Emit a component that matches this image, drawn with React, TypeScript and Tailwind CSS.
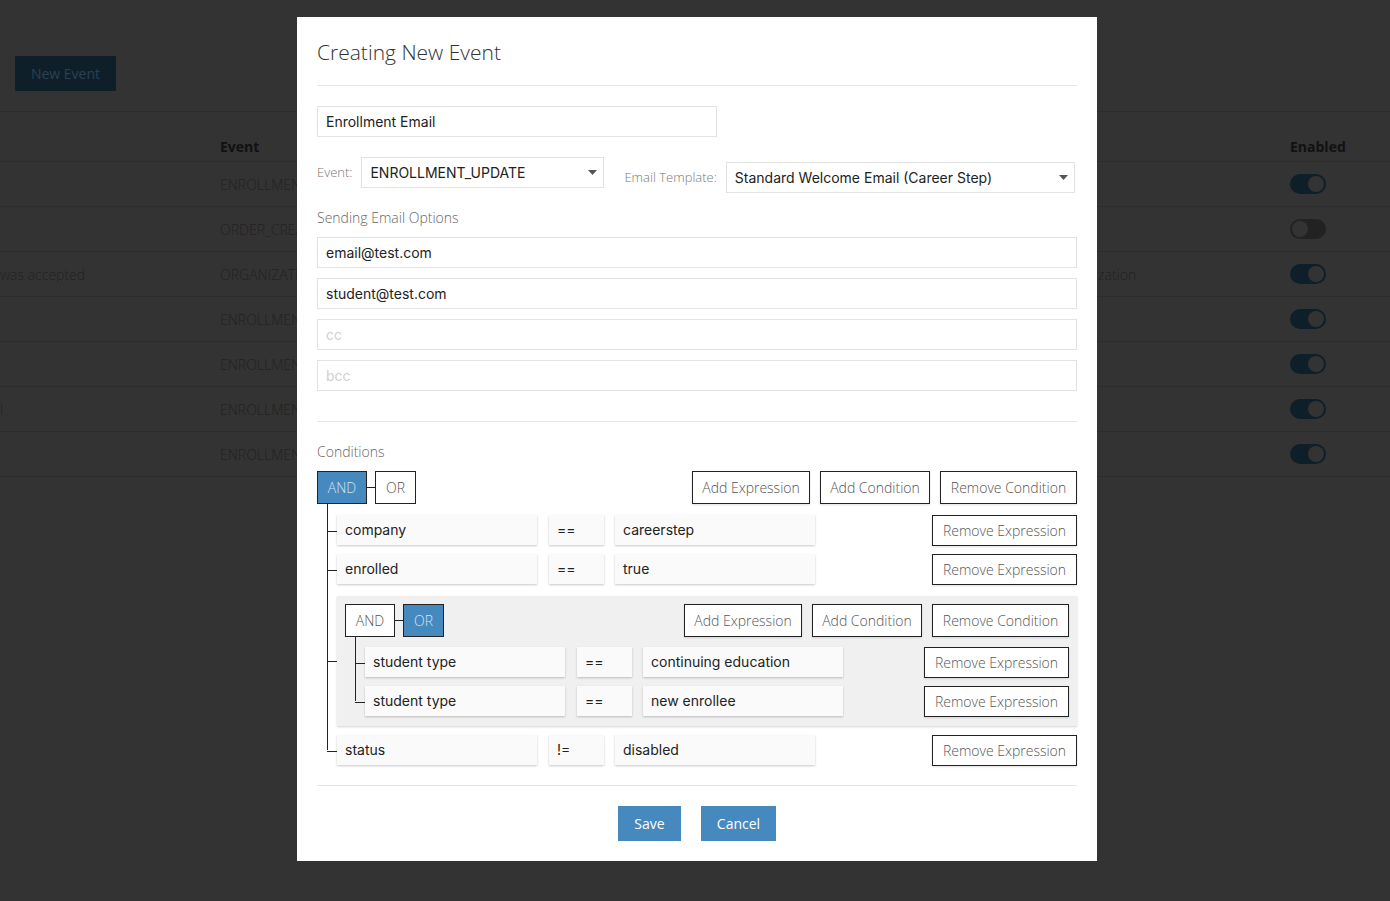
import type { ReactNode } from "react";

// Email event editor: dimmed events table in the back, "Creating New Event" modal on top.

const ui = "font-['Open_Sans',sans-serif]";
const val = "font-['Inter',sans-serif]";

type Row = { left?: string; event: string; right?: string; enabled: boolean };

const rows: Row[] = [
  { event: "ENROLLMENT_UPDATE", enabled: true },
  { event: "ORDER_CREATED", enabled: false },
  { left: "was accepted", event: "ORGANIZATION_INVITE", right: "zation", enabled: true },
  { event: "ENROLLMENT_UPDATE", enabled: true },
  { event: "ENROLLMENT_UPDATE", enabled: true },
  { left: "l", event: "ENROLLMENT_UPDATE", enabled: true },
  { event: "ENROLLMENT_UPDATE", enabled: true },
];

function Toggle({ on }: { on: boolean }) {
  return (
    <div
      className={`flex h-[20px] w-[36px] items-center rounded-full px-[2px] ${
        on ? "justify-end bg-[#0f1f2a]" : "justify-start bg-[#222]"
      }`}
    >
      <div className="h-[16px] w-[16px] rounded-full bg-[#333]" />
    </div>
  );
}

function Caret() {
  return (
    <svg width="9" height="5" viewBox="0 0 9 5" className="shrink-0">
      <path d="M0 0h9L4.5 5z" fill="#555" />
    </svg>
  );
}

const outlineBtn =
  "flex items-center justify-center border border-[#222] bg-white text-[14px] font-light text-[#555] shadow-[0_1px_2px_rgba(0,0,0,0.12)]";

function GroupHeader({ mode }: { mode: "AND" | "OR" }) {
  const on = "bg-[#4689bf] text-[#d3e4f1]";
  const off = "bg-white text-[#555]";
  return (
    <div className={`flex h-[33px] items-center ${ui}`}>
      <button className={`h-[33px] w-[50px] border border-[#222] text-[14px] font-light ${mode === "AND" ? on : off}`}>
        AND
      </button>
      <div className="h-px w-[8px] bg-[#222]" />
      <button className={`h-[33px] w-[41px] border border-[#222] text-[14px] font-light ${mode === "OR" ? on : off}`}>
        OR
      </button>
      <div className="ml-auto flex gap-[10px]">
        <button className={`${outlineBtn} h-[33px] w-[118px]`}>Add Expression</button>
        <button className={`${outlineBtn} h-[33px] w-[110px]`}>Add Condition</button>
        <button className={`${outlineBtn} h-[33px] w-[137px]`}>Remove Condition</button>
      </div>
    </div>
  );
}

function Tick() {
  return <div className="absolute -left-[10px] top-1/2 h-px w-[10px] bg-[#222]" />;
}

function Expression({ field, op, value, className = "" }: { field: string; op: string; value: string; className?: string }) {
  const box = "flex h-[30px] items-center bg-[#fafafa] px-2 pb-px text-[14px] text-[#222] shadow-[0_1px_2px_rgba(0,0,0,0.22)]";
  return (
    <div className={`relative flex h-[31px] items-start ${className}`}>
      <Tick />
      <div className={`${val} flex`}>
        <div className={`${box} w-[200px]`}>{field}</div>
        <div className={`${box} ml-[12px] w-[55px]`}>{op}</div>
        <div className={`${box} ml-[11px] w-[200px]`}>{value}</div>
      </div>
      <button className={`${outlineBtn} ${ui} ml-auto h-[31px] w-[145px]`}>Remove Expression</button>
    </div>
  );
}

function Children({ children }: { children: ReactNode }) {
  return (
    <div className="relative flex flex-col pl-[20px]">
      <div className="absolute bottom-[16px] left-[10px] top-0 w-px bg-[#222]" />
      {children}
    </div>
  );
}

function Field({ value, placeholder }: { value?: string; placeholder?: string }) {
  return (
    <div className={`${val} flex h-[31px] items-center border border-[#e2e2e2] bg-white px-[8px] text-[14px]`}>
      {value ? <span className="text-[#222]">{value}</span> : <span className="text-[#d0d0d0]">{placeholder}</span>}
    </div>
  );
}

export default function App() {
  return (
    <div className={`relative h-[901px] w-[1390px] overflow-hidden bg-[#333] ${ui}`}>
      {/* Background page (under overlay) */}
      <div className="pt-[56px]">
        <div className="pl-[15px]">
          <button className="h-[35px] w-[101px] bg-[#0f1f2a] text-[14px] text-[#2b4152]">New Event</button>
        </div>
        <div className="mt-[20px] border-t border-[#2c2c2c]">
          <div className="flex h-[50px] items-end border-b border-[#2c2c2c] pb-[4px] text-[14px] font-bold text-[#111]">
            <div className="w-[220px]" />
            <div className="flex-1">Event</div>
            <div className="w-[100px]">Enabled</div>
          </div>
          {rows.map((r, i) => (
            <div key={i} className="flex h-[45px] items-center border-b border-[#2c2c2c] text-[14px] font-light text-[#222]">
              <div className="w-[220px] whitespace-nowrap">{r.left}</div>
              <div className="w-[878px]">
                <div className="w-[77px] overflow-hidden whitespace-nowrap">{r.event}</div>
              </div>
              <div className="w-[192px]">{r.right}</div>
              <div className="w-[100px]">
                <Toggle on={r.enabled} />
              </div>
            </div>
          ))}
        </div>
      </div>

      {/* Modal */}
      <div className="absolute left-[297px] top-[17px] w-[800px] bg-white px-5 pb-5">
        <div className="border-b border-[#e5e5e5] pb-[19px] pt-[21px]">
          <h2 className="text-[21px] font-light leading-[28px] text-[#333]">Creating New Event</h2>
        </div>

        <div className="mt-5 w-[400px]">
          <Field value="Enrollment Email" />
        </div>

        <div className="mt-5 flex items-start">
          <div className="flex items-center">
            <span className="text-[13px] font-light text-[#777]">Event:</span>
            <div className={`${val} ml-[9px] flex h-[31px] w-[243px] items-center justify-between border border-[#e2e2e2] pl-[8px] pr-[6px] text-[14px] text-[#222]`}>
              ENROLLMENT_UPDATE
              <Caret />
            </div>
          </div>
          <div className="ml-5 mt-[5px] flex items-center">
            <span className="text-[13px] font-light text-[#777]">Email Template:</span>
            <div className={`${val} ml-[9px] flex h-[31px] w-[349px] items-center justify-between border border-[#e2e2e2] pl-[8px] pr-[6px] text-[14px] text-[#222]`}>
              Standard Welcome Email (Career Step)
              <Caret />
            </div>
          </div>
        </div>

        <div className="mt-[15px] text-[14px] font-light leading-5 text-[#666]">Sending Email Options</div>
        <div className="mt-[9px] flex flex-col gap-[10px]">
          <Field value="email@test.com" />
          <Field value="student@test.com" />
          <Field placeholder="cc" />
          <Field placeholder="bcc" />
        </div>

        <div className="mt-[30px] border-t border-[#e5e5e5]" />

        <div className="mt-5 text-[14px] font-light leading-5 text-[#666]">Conditions</div>

        {/* Condition tree */}
        <div className="mt-[9px]">
          <GroupHeader mode="AND" />
          <Children>
            <Expression className="mt-[11px]" field="company" op="==" value="careerstep" />
            <Expression className="mt-[8px]" field="enrolled" op="==" value="true" />
            <div className="relative mt-[11px] bg-[#f0f0f0] px-[8px] pb-[9px] pt-[8px] shadow-[0_1px_2px_rgba(0,0,0,0.18)]">
              <Tick />
              <GroupHeader mode="OR" />
              <Children>
                <Expression className="mt-[10px]" field="student type" op="==" value="continuing education" />
                <Expression className="mt-[8px]" field="student type" op="==" value="new enrollee" />
              </Children>
            </div>
            <Expression className="mt-[9px]" field="status" op="!=" value="disabled" />
          </Children>
        </div>

        <div className="mt-[19px] border-t border-[#e5e5e5]" />

        <div className="mt-5 flex justify-center gap-5">
          <button className="h-[35px] w-[63px] bg-[#4689bf] text-[14px] text-white">Save</button>
          <button className="h-[35px] w-[75px] bg-[#4689bf] text-[14px] text-white">Cancel</button>
        </div>
      </div>
    </div>
  );
}
